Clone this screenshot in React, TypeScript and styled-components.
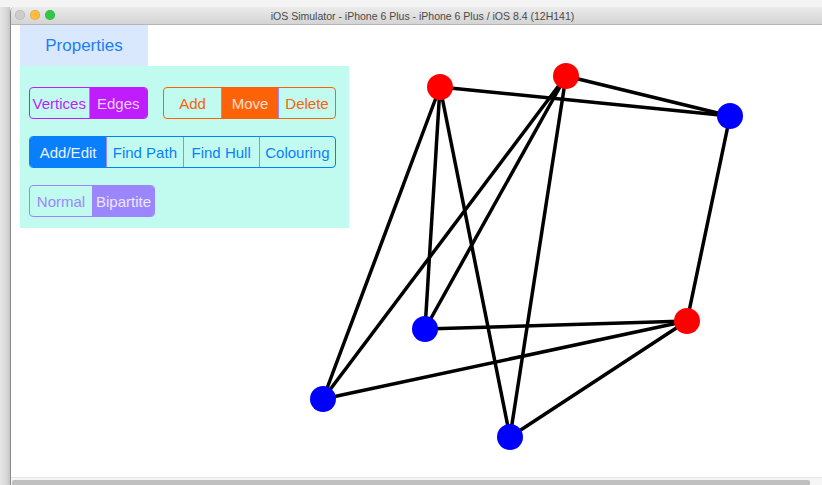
import React, { useState } from 'react'
import styled, { createGlobalStyle } from 'styled-components'

const GlobalStyle = createGlobalStyle`
  html, body {
    margin: 0;
    padding: 0;
    background: #f4f4f4;
  }
  * {
    box-sizing: border-box;
  }
`

const Screen = styled.div`
  width: 822px;
  height: 485px;
  overflow: hidden;
  display: flex;
  background: #f4f4f4;
  font-family: 'Liberation Sans', Arial, sans-serif;
`

const DesktopShadow = styled.div`
  width: 10px;
  margin-top: 7px;
  background: linear-gradient(to right, #e6e6e6, #d6d6d6 70%, #c4c4c4);
`

const Window = styled.div`
  flex: 1;
  margin-top: 7px;
  display: flex;
  flex-direction: column;
  border-left: 1px solid #8c8c8c;
  border-top-left-radius: 5px;
  overflow: hidden;
  background: #ffffff;
`

const TitleBar = styled.div`
  height: 18px;
  flex-shrink: 0;
  display: flex;
  align-items: center;
  position: relative;
  background: linear-gradient(to bottom, #ebebeb, #d4d4d4);
  border-bottom: 1px solid #b5b5b5;
`

const Lights = styled.div`
  position: absolute;
  left: 4px;
  top: 3px;
  display: flex;
  gap: 5px;
`

const Light = styled.span<{ $color: string }>`
  width: 10px;
  height: 10px;
  border-radius: 50%;
  background: ${({ $color }) => $color};
  box-shadow: inset 0 0 0 0.5px rgba(0, 0, 0, 0.15);
`

const Title = styled.div`
  flex: 1;
  text-align: center;
  padding-left: 12px;
  font-size: 10.5px;
  color: #4a4a4a;
`

const Content = styled.div`
  flex: 1;
  position: relative;
  padding-left: 9px;
`

const Tab = styled.div`
  width: 128px;
  height: 41px;
  display: flex;
  align-items: center;
  justify-content: center;
  background: #d9e8fd;
  color: #1b7ef5;
  font-size: 17px;
`

const Panel = styled.div`
  width: 329px;
  padding: 21px 13px 11px 9px;
  background: #c1fbef;
  display: flex;
  flex-direction: column;
  gap: 17px;
`

const Row = styled.div`
  display: flex;
  gap: 15px;
`

const Segmented = styled.div<{ $tint: string; $width: number; $count: number }>`
  width: ${({ $width }) => $width}px;
  height: 32px;
  display: grid;
  grid-template-columns: repeat(${({ $count }) => $count}, 1fr);
  border: 1px solid ${({ $tint }) => $tint};
  border-radius: 4px;
  overflow: hidden;
`

const Segment = styled.div<{ $tint: string; $selected: boolean; $on: string }>`
  display: flex;
  align-items: center;
  justify-content: center;
  font-size: 15px;
  white-space: nowrap;
  color: ${({ $tint, $selected, $on }) => ($selected ? $on : $tint)};
  background: ${({ $tint, $selected }) => ($selected ? $tint : 'transparent')};
  & + & {
    border-left: 1px solid ${({ $tint }) => $tint};
  }
`

const Canvas = styled.svg`
  position: absolute;
  left: 0;
  top: 0;
  pointer-events: none;
`

const Footer = styled.div`
  height: 8px;
  flex-shrink: 0;
  border-top: 1px solid #e4e4e4;
  padding: 2px 12px 0 1px;
  background: #f6f6f6;
`

const ScrollThumb = styled.div`
  height: 6px;
  background: #c0c0c0;
  border-radius: 2px 2px 0 0;
`

type ControlProps = {
  items: string[]
  tint: string
  on: string
  width: number
  initial: number
}

const SegmentedControl = ({ items, tint, on, width, initial }: ControlProps) => {
  const [selected, setSelected] = useState(initial)
  return (
    <Segmented $tint={tint} $width={width} $count={items.length}>
      {items.map((item, i) => (
        <Segment key={item} $tint={tint} $on={on} $selected={i === selected} onClick={() => setSelected(i)}>
          {item}
        </Segment>
      ))}
    </Segmented>
  )
}

const nodes: Record<string, { x: number; y: number; color: string }> = {
  a: { x: 440, y: 87, color: '#ff0000' },
  b: { x: 566, y: 76, color: '#ff0000' },
  c: { x: 730, y: 116, color: '#0000ff' },
  d: { x: 687, y: 321, color: '#ff0000' },
  e: { x: 425, y: 329, color: '#0000ff' },
  f: { x: 323, y: 399, color: '#0000ff' },
  g: { x: 510, y: 437, color: '#0000ff' },
}

const edges = [
  ['a', 'c'],
  ['a', 'e'],
  ['a', 'f'],
  ['a', 'g'],
  ['b', 'c'],
  ['b', 'e'],
  ['b', 'f'],
  ['b', 'g'],
  ['c', 'd'],
  ['d', 'e'],
  ['d', 'f'],
  ['d', 'g'],
]

const Graph = () => (
  <Canvas width={811} height={452} viewBox="11 25 811 452">
    {edges.map(([from, to]) => (
      <line
        key={from + to}
        x1={nodes[from].x}
        y1={nodes[from].y}
        x2={nodes[to].x}
        y2={nodes[to].y}
        stroke="#000"
        strokeWidth={3.5}
      />
    ))}
    {Object.entries(nodes).map(([id, n]) => (
      <circle key={id} cx={n.x} cy={n.y} r={13} fill={n.color} />
    ))}
  </Canvas>
)

const App = () => {
  return (
    <>
      <GlobalStyle />
      <Screen>
        <DesktopShadow />
        <Window>
          <TitleBar>
            <Lights>
              <Light $color="#cdcdcd" />
              <Light $color="#fdbb3f" />
              <Light $color="#33c748" />
            </Lights>
            <Title>iOS Simulator - iPhone 6 Plus - iPhone 6 Plus / iOS 8.4 (12H141)</Title>
          </TitleBar>
          <Content>
            <Graph />
            <Tab>Properties</Tab>
            <Panel>
              <Row>
                <SegmentedControl items={['Vertices', 'Edges']} tint="#bf1dfd" on="#ead2ff" width={119} initial={1} />
                <SegmentedControl items={['Add', 'Move', 'Delete']} tint="#fd6208" on="#ffe0cc" width={173} initial={1} />
              </Row>
              <Row>
                <SegmentedControl
                  items={['Add/Edit', 'Find Path', 'Find Hull', 'Colouring']}
                  tint="#0a7ffb"
                  on="#e8f3ff"
                  width={307}
                  initial={0}
                />
              </Row>
              <Row>
                <SegmentedControl items={['Normal', 'Bipartite']} tint="#9b86fd" on="#ece6ff" width={126} initial={1} />
              </Row>
            </Panel>
          </Content>
          <Footer>
            <ScrollThumb />
          </Footer>
        </Window>
      </Screen>
    </>
  )
}

export default App
